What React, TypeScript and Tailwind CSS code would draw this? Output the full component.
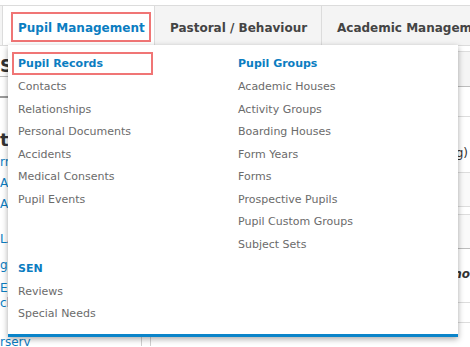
import React from "react";

const leftItems = ["Contacts", "Relationships", "Personal Documents", "Accidents", "Medical Consents", "Pupil Events"];
const senItems = ["Reviews", "Special Needs"];
const groupItems = [
  "Academic Houses",
  "Activity Groups",
  "Boarding Houses",
  "Form Years",
  "Forms",
  "Prospective Pupils",
  "Pupil Custom Groups",
  "Subject Sets",
];

function MenuItem({ label }: { label: string }) {
  return <div className="h-[22.5px] flex items-center pl-[6px] pt-[2px] text-[11px] text-[#6b6b6b]">{label}</div>;
}

export default function App() {
  return (
    <div
      className="relative w-[470px] h-[347px] overflow-hidden bg-white"
      style={{ fontFamily: '"DejaVu Sans", Verdana, sans-serif' }}
    >
      {/* top nav */}
      <div className="h-[5px] bg-white" />
      <nav className="flex h-[41px] border-t border-b border-[#dcdcdc] bg-[#f4f4f4] text-[12px] font-bold">
        <div className="w-[3px] border-r border-[#dcdcdc]" />
        <div className="w-[152px] border-r border-[#dcdcdc] bg-white flex items-center pl-[8px] pt-[2px]">
          <div className="w-[140px] h-[30px] border-2 border-[#f07575] flex items-center pl-[5px] pt-[2px] text-[#0b7dc1]">
            Pupil Management
          </div>
        </div>
        <div className="w-[167px] border-r border-[#dcdcdc] flex items-center pl-[15px] pt-[4px] text-[#444]">
          Pastoral / Behaviour
        </div>
        <div className="flex-1 flex items-center pl-[15px] pt-[4px] text-[#444] whitespace-nowrap overflow-hidden">
          Academic Management
        </div>
      </nav>

      {/* page behind the menu */}
      <div className="flex h-[300px]">
        <div className="w-[142px] border-r border-[#d0d0d0] overflow-hidden whitespace-nowrap">
          <div className="h-[31px] border-b border-[#bdbdbd] pt-[6px] text-[18px] font-bold text-[#333]">Search</div>
          <div className="h-[21px] border-b-2 border-[#9a9a9a]" />
          <div className="h-[40px] pt-[28px] text-[18px] font-bold text-[#333]">ts</div>
          <div className="mt-[16px] flex flex-col gap-[5px] text-[12px] text-[#0b7dc1] leading-[16px]">
            <div>rn Year</div>
            <div>All Pupils</div>
            <div className="mb-[14px]">All Staff</div>
            <div>LA Reports</div>
            <div className="mt-[5px]">gifted</div>
            <div className="mt-[2px]">EXAMS</div>
            <div className="-mt-[6px]">ch Groups</div>
            <div className="mt-[18px]">rsery</div>
          </div>
        </div>
        <div className="w-[9px] border-r border-[#d0d0d0]" />
        <div className="flex-1 flex flex-col">
          <div className="h-[6px] border-b border-[#dddddd]" />
          <div className="h-[35px] bg-[#f5f5f5] border-b border-[#bdbdbd]" />
          <div className="h-[30px] border-b border-[#dddddd]" />
          <div className="h-[56px] border-b border-[#dddddd] flex items-center justify-end pr-[2px] pt-[16px] text-[12px] text-[#333]">
            (Reading)
          </div>
          <div className="h-[34px] border-b border-[#dddddd] bg-[#fafafa]" />
          <div className="h-[8px] border-b border-[#dddddd]" />
          <div className="h-[34px] border-b border-[#bdbdbd] bg-[#fafafa]" />
          <div className="h-[54px] border-b border-[#dddddd] flex items-center justify-end pb-[4px] text-[12px] italic font-bold text-[#333]">
            Who
          </div>
          <div className="h-[20px] border-b border-[#dddddd]" />
        </div>
      </div>

      {/* dropdown menu */}
      <div className="absolute left-[8px] top-[45px] w-[450px] h-[292px] bg-white border-b-[3px] border-[#0a84c9] shadow-[0_2px_6px_rgba(0,0,0,0.35)] flex pl-[4px] pt-[7px]">
        <div className="w-[226px] flex flex-col">
          <div className="w-[141px] h-[23px] border-2 border-[#f07575] flex items-center pl-[4px] pt-[2px] text-[11px] font-bold text-[#0b7dc1]">
            Pupil Records
          </div>
          {leftItems.map((item) => (
            <MenuItem key={item} label={item} />
          ))}
          <div className="h-[46.5px]" />
          <div className="h-[23px] flex items-center pl-[6px] pt-[2px] text-[11px] font-bold text-[#0b7dc1]">SEN</div>
          {senItems.map((item) => (
            <MenuItem key={item} label={item} />
          ))}
        </div>
        <div className="flex-1 flex flex-col -ml-[6px]">
          <div className="h-[23px] flex items-center pl-[6px] pt-[2px] text-[11px] font-bold text-[#0b7dc1]">Pupil Groups</div>
          {groupItems.map((item) => (
            <MenuItem key={item} label={item} />
          ))}
        </div>
      </div>
    </div>
  );
}
